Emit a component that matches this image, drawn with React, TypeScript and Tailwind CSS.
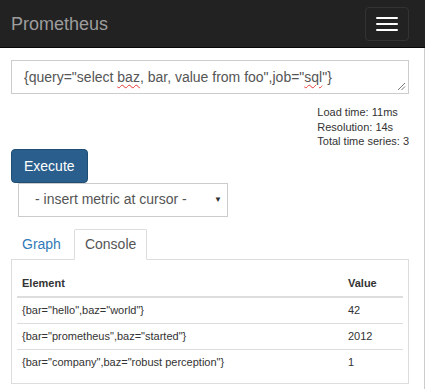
import React from 'react';

const rows = [
  { element: '{bar="hello",baz="world"}', value: '42' },
  { element: '{bar="prometheus",baz="started"}', value: '2012' },
  { element: '{bar="company",baz="robust perception"}', value: '1' },
];

const Squiggle: React.FC<{ children: React.ReactNode }> = ({ children }) => (
  <span className="underline decoration-wavy decoration-[#e53935] decoration-1 underline-offset-[2px]">{children}</span>
);

const App: React.FC = () => {
  return (
    <div
      className="min-h-screen bg-white text-[#333]"
      style={{ fontFamily: '"Liberation Sans", Arial, sans-serif' }}
    >
      {/* navbar */}
      <nav className="h-12 bg-[#222] border-b border-[#080808] flex items-center justify-between pl-[11px] pr-[16px]">
        <span className="text-[18px] text-[#9d9d9d] leading-5">Prometheus</span>
        <button className="w-[44px] h-[34px] border border-[#333] rounded-[4px] flex flex-col items-center justify-center gap-[4px]">
          <span className="block w-[22px] h-[2px] bg-white rounded-[1px]" />
          <span className="block w-[22px] h-[2px] bg-white rounded-[1px]" />
          <span className="block w-[22px] h-[2px] bg-white rounded-[1px]" />
        </button>
      </nav>

      <main className="border-r border-[#ccc] pl-[11px] pr-[15px] pt-[12px] min-h-[341px] flex flex-col">
        {/* expression input */}
        <div className="relative h-[34px] border border-[#ccc] px-[12px] text-[14px] leading-[32px] text-[#555] whitespace-nowrap overflow-hidden">
          {'{query="select '}
          <Squiggle>baz</Squiggle>
          {', bar, value from foo",job="'}
          <Squiggle>sql</Squiggle>
          {'"}'}
          <svg className="absolute right-[2px] bottom-[2px]" width="9" height="9" viewBox="0 0 9 9">
            <path d="M8 1 L1 8 M8 4.5 L4.5 8" stroke="#777" strokeWidth="1" />
          </svg>
        </div>

        {/* stats */}
        <div className="flex justify-end mt-[11px]">
          <div className="text-[11px] leading-[14.5px] text-[#333]">
            <div>Load time: 11ms</div>
            <div>Resolution: 14s</div>
            <div>Total time series: 3</div>
          </div>
        </div>

        {/* execute */}
        <button className="self-start h-[34px] px-[12px] bg-[#2a5f8d] border border-[#204d74] rounded-[4px] text-white text-[14px] leading-5">
          Execute
        </button>

        {/* metric select */}
        <div className="ml-[7px] w-[210px] h-[34px] border border-[#ccc] flex items-center justify-between pl-[16px] pr-[5px] text-[14px] text-[#555]">
          <span>- insert metric at cursor -</span>
          <span className="text-[8px] text-[#333]">▼</span>
        </div>

        {/* tabs */}
        <ul className="mt-[12px] flex border-b border-[#ddd] text-[14px]">
          <li className="h-[31px] -mb-px mr-[2px] border border-transparent px-[10px] flex items-center text-[#337ab7]">
            Graph
          </li>
          <li className="h-[31px] -mb-px border border-[#ddd] border-b-white bg-white rounded-t-[2px] px-[10px] flex items-center text-[#555]">
            Console
          </li>
        </ul>

        <div className="border border-t-0 border-[#ddd] px-[5px] pt-[10px] pb-[8px]">
          <table className="w-full border-collapse text-[11px]">
            <thead>
              <tr>
                <th className="text-left font-bold px-[5px] py-[6px] leading-[14px] border-b-2 border-[#ddd]">Element</th>
                <th className="text-left font-bold px-[5px] py-[6px] leading-[14px] border-b-2 border-[#ddd] w-[60px]">Value</th>
              </tr>
            </thead>
            <tbody>
              {rows.map((r, i) => (
                <tr key={i}>
                  <td className={`px-[5px] py-[6px] leading-[13px] ${i > 0 ? 'border-t border-[#ddd]' : ''}`}>{r.element}</td>
                  <td className={`px-[5px] py-[6px] leading-[13px] ${i > 0 ? 'border-t border-[#ddd]' : ''}`}>{r.value}</td>
                </tr>
              ))}
            </tbody>
          </table>
        </div>
      </main>
    </div>
  );
};

export default App;
